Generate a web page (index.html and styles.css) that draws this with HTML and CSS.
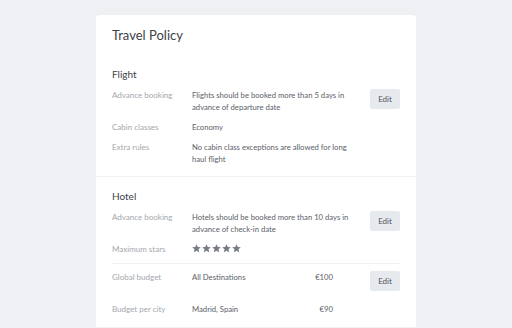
FILE: index.html
```html
<!DOCTYPE html>
<html lang="en">
<head>
  <meta charset="UTF-8" />
  <title>Travel Policy</title>
  <link rel="stylesheet" href="styles.css">
</head>
<body>

  <div class="card">
    <h1 class="card-title">Travel Policy</h1>

    <div class="section">
      <h2 class="section-title">Flight</h2>

      <div class="row">
        <div class="label">Advance booking</div>
        <div class="value">Flights should be booked more than 5 days in advance of departure date</div>
        <button class="edit-btn">Edit</button>
      </div>

      <div class="row">
        <div class="label">Cabin classes</div>
        <div class="value">Economy</div>
      </div>

      <div class="row">
        <div class="label">Extra rules</div>
        <div class="value">No cabin class exceptions are allowed for long haul flight</div>
      </div>
    </div>

    <div class="section">
      <h2 class="section-title">Hotel</h2>

      <div class="row">
        <div class="label">Advance booking</div>
        <div class="value">Hotels should be booked more than 10 days in advance of check-in date</div>
        <button class="edit-btn">Edit</button>
      </div>

      <div class="row">
        <div class="label">Maximum stars</div>
        <div class="value stars">
          <svg viewBox="0 0 10 10"><path d="M5 0.3l1.4 3.1 3.4 0.3-2.6 2.2 0.8 3.3L5 7.5 2 9.2l0.8-3.3L0.2 3.7l3.4-0.3z"/></svg>
          <svg viewBox="0 0 10 10"><path d="M5 0.3l1.4 3.1 3.4 0.3-2.6 2.2 0.8 3.3L5 7.5 2 9.2l0.8-3.3L0.2 3.7l3.4-0.3z"/></svg>
          <svg viewBox="0 0 10 10"><path d="M5 0.3l1.4 3.1 3.4 0.3-2.6 2.2 0.8 3.3L5 7.5 2 9.2l0.8-3.3L0.2 3.7l3.4-0.3z"/></svg>
          <svg viewBox="0 0 10 10"><path d="M5 0.3l1.4 3.1 3.4 0.3-2.6 2.2 0.8 3.3L5 7.5 2 9.2l0.8-3.3L0.2 3.7l3.4-0.3z"/></svg>
          <svg viewBox="0 0 10 10"><path d="M5 0.3l1.4 3.1 3.4 0.3-2.6 2.2 0.8 3.3L5 7.5 2 9.2l0.8-3.3L0.2 3.7l3.4-0.3z"/></svg>
        </div>
      </div>

      <div class="divider"></div>

      <div class="row budget-row">
        <div class="label">Global budget</div>
        <div class="value budget">
          <span>All Destinations</span>
          <span>€100</span>
        </div>
        <button class="edit-btn">Edit</button>
      </div>

      <div class="row">
        <div class="label">Budget per city</div>
        <div class="value budget">
          <span>Madrid, Spain</span>
          <span>€90</span>
        </div>
      </div>
    </div>
  </div>

</body>
</html>
```

FILE: styles.css
```css
body {
  margin: 0;
  background-color: #eef0f3;
  font-family: Lato, "Liberation Sans", sans-serif;
  color: #5b6068;
}

.card {
  width: 320px;
  margin: 15px auto 0;
  padding-bottom: 24px;
  background: #ffffff;
  border-radius: 4px 4px 0 0;
}

.card-title {
  margin: 0;
  padding: 11px 16px 10px;
  font-size: 13px;
  line-height: 18px;
  font-weight: 400;
  color: #3d4148;
}

.section {
  padding: 13px 16px 11px;
  border-bottom: 1px solid #f0f1f3;
}

.section + .section {
  padding-top: 12px;
  padding-bottom: 12px;
}

.section-title {
  margin: 0 0 8px;
  font-size: 10px;
  line-height: 14px;
  font-weight: 400;
  color: #3d4148;
}

.row {
  display: flex;
  align-items: flex-start;
  font-size: 8px;
  line-height: 12px;
}

.row + .row {
  margin-top: 8px;
}

.budget-row + .row {
  margin-top: 12px;
}

.label {
  width: 80px;
  flex-shrink: 0;
  color: #a3a7ae;
}

.value {
  width: 168px;
  font-size: 7.7px;
  color: #5b6068;
}

.value.budget {
  width: 141px;
  display: flex;
  justify-content: space-between;
}

.stars {
  display: flex;
  gap: 1px;
  padding-top: 1px;
}

.stars svg {
  width: 9px;
  height: 9px;
  fill: #767b85;
}

.divider {
  height: 1px;
  background: #eff0f2;
  margin: 8px 0 7px;
}

.edit-btn {
  margin-left: auto;
  width: 30px;
  height: 20px;
  padding: 0;
  border: none;
  border-radius: 2px;
  background: #e6e9ed;
  color: #50555d;
  font-family: Lato, "Liberation Sans", sans-serif;
  font-size: 8px;
  cursor: pointer;
}
```
